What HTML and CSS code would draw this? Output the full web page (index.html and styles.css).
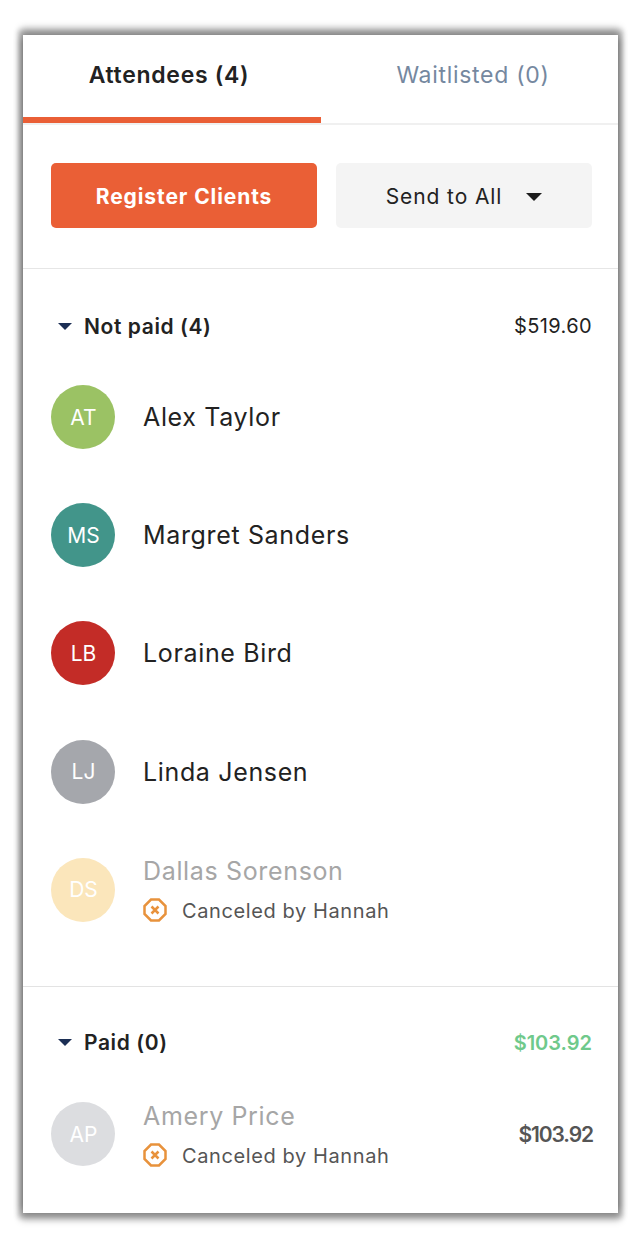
FILE: index.html
```html
<!DOCTYPE html>
<html lang="en">
<head>
<meta charset="UTF-8" />
<title>Attendees</title>
<link rel="stylesheet" href="styles.css">
</head>
<body>
<div class="card">
  <div class="tabs">
    <div class="tab active">Attendees (4)</div>
    <div class="tab">Waitlisted (0)</div>
  </div>

  <div class="actions">
    <div class="btn btn-primary">Register Clients</div>
    <div class="btn btn-light">Send to All <span class="caret"></span></div>
  </div>

  <section class="group group-unpaid">
    <div class="group-head">
      <div class="group-title"><span class="caret caret-navy"></span>Not paid (4)</div>
      <div class="amount">$519.60</div>
    </div>
    <div class="person">
      <div class="avatar green">AT</div>
      <div class="name">Alex Taylor</div>
    </div>
    <div class="person">
      <div class="avatar teal">MS</div>
      <div class="name">Margret Sanders</div>
    </div>
    <div class="person">
      <div class="avatar red">LB</div>
      <div class="name">Loraine Bird</div>
    </div>
    <div class="person">
      <div class="avatar grey">LJ</div>
      <div class="name">Linda Jensen</div>
    </div>
    <div class="person canceled">
      <div class="avatar cream">DS</div>
      <div class="info">
        <div class="name">Dallas Sorenson</div>
        <div class="status">
          <svg class="status-icon" viewBox="0 0 24 24"><path d="M8 1.500h8L22.500 8v8L16 22.500H8L1.500 16V8z M8.500 8.500l7 7 M15.500 8.500l-7 7"/></svg>
          Canceled by Hannah
        </div>
      </div>
    </div>
  </section>

  <section class="group group-paid">
    <div class="group-head">
      <div class="group-title"><span class="caret caret-navy"></span>Paid (0)</div>
      <div class="amount amount-green">$103.92</div>
    </div>
    <div class="person canceled">
      <div class="avatar silver">AP</div>
      <div class="info">
        <div class="name">Amery Price</div>
        <div class="status">
          <svg class="status-icon" viewBox="0 0 24 24"><path d="M8 1.500h8L22.500 8v8L16 22.500H8L1.500 16V8z M8.500 8.500l7 7 M15.500 8.500l-7 7"/></svg>
          Canceled by Hannah
        </div>
      </div>
      <div class="person-amount">$103.92</div>
    </div>
  </section>
</div>
</body>
</html>
```

FILE: styles.css
```css
html, body {
  margin: 0;
  padding: 0;
  background: #fff;
}
body {
  font-family: "Inter", "Open Sans", sans-serif;
  color: #222;
  padding: 35px 24px 41px 23px;
}
.card {
  height: 1178px;
  background: #fff;
  box-shadow: 0 -5px 7px 2px rgba(0,0,0,0.28), 0 5px 7px 2px rgba(0,0,0,0.28), 0 0 5px 5px rgba(0,0,0,0.2);
  overflow: hidden;
}

/* tabs */
.tabs {
  display: flex;
  height: 90px;
  border-bottom: 2px solid #f0f0f0;
  box-sizing: border-box;
}
.tab {
  flex: 1;
  box-sizing: border-box;
  padding: 27px 0 0 7px;
  font-size: 23px;
  line-height: 27px;
  letter-spacing: 0.7px;
  text-align: center;
  color: #75889f;
}
.tab.active {
  flex: 0 0 298px;
  height: 88px;
  font-weight: 600;
  color: #222;
  border-bottom: 6px solid #ea5f36;
  padding: 27px 6px 0 0;
}

/* buttons */
.actions {
  display: flex;
  gap: 19px;
  padding: 38px 26px 40px 28px;
  border-bottom: 1px solid #e6e6e6;
}
.btn {
  height: 65px;
  box-sizing: border-box;
  padding-top: 2px;
  display: flex;
  align-items: center;
  justify-content: center;
  border-radius: 5px;
  font-size: 21px;
  letter-spacing: 0.9px;
}
.btn-primary {
  flex: 0 0 266px;
  background: #ea5f36;
  color: #fff;
  font-weight: 700;
}
.btn-light {
  flex: 1;
  background: #f4f4f4;
  color: #222;
  gap: 24px;
}
.caret {
  display: inline-block;
  width: 0;
  height: 0;
  border-left: 8px solid transparent;
  border-right: 8px solid transparent;
  border-top: 8px solid #1c1c1c;
}
.caret-navy {
  border-left-width: 7px;
  border-right-width: 7px;
  border-top: 7px solid #1c2f55;
  margin-right: 12px;
}

/* attendee groups */
.group {
  padding: 0 26px 0 28px;
}
.group-unpaid {
  border-bottom: 1px solid #e3e3e3;
  height: 717px;
}
.group-head {
  display: flex;
  justify-content: space-between;
  align-items: center;
  height: 114px;
  box-sizing: border-box;
  font-size: 21px;
}
.group-paid .group-head {
  height: 112px;
}
.group-title {
  display: flex;
  align-items: center;
  padding-left: 7px;
  font-weight: 600;
  letter-spacing: 0.6px;
}
.group-paid .group-title {
  padding-bottom: 2px;
}
.amount {
  font-size: 20px;
  letter-spacing: 0.4px;
}
.amount-green {
  color: #6fc98b;
  font-weight: 600;
  letter-spacing: 0;
}
.person {
  display: flex;
  align-items: center;
  gap: 28px;
  height: 64px;
  margin-bottom: 54.200px;
}
.group-head + .person {
  margin-top: 2px;
}
.group-paid .group-head + .person {
  margin-top: 3px;
}
.avatar {
  flex: 0 0 64px;
  height: 64px;
  box-sizing: border-box;
  padding-left: 1px;
  border-radius: 50%;
  display: flex;
  align-items: center;
  justify-content: center;
  color: #fff;
  font-size: 21px;
}
.green { background: #9bc264; }
.teal { background: #42958a; }
.red { background: #c32c27; }
.grey { background: #a5a7ac; }
.cream { background: #fbe6bb; }
.silver { background: #dcdde0; }
.name {
  font-size: 25px;
  line-height: 30px;
  letter-spacing: 0.65px;
  color: #222;
}
.info {
  flex: 1;
}
.canceled .name {
  color: #a6a6a6;
}
.status {
  display: flex;
  align-items: center;
  gap: 15px;
  margin-top: 13px;
  font-size: 20px;
  line-height: 24px;
  letter-spacing: 0.6px;
  color: #555;
}
.status-icon {
  width: 24px;
  height: 24px;
  margin-top: -2px;
  fill: none;
  stroke: #e8923c;
  stroke-width: 2.5;
}
.person-amount {
  font-size: 21px;
  font-weight: 600;
  color: #555;
  letter-spacing: -1.1px;
  margin-right: -1px;
}
```
